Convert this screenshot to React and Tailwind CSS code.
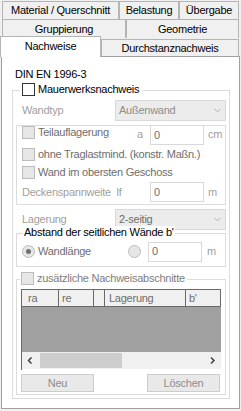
import React from "react";

function Tab({ className, children }) {
  return (
    <div className={`flex items-center justify-center border-l border-r border-t border-[#b4b4b4] bg-[#f0f0f0] ${className}`}>
      {children}
    </div>
  );
}

function Box({ enabled }) {
  return enabled ? (
    <span className="block h-[13px] w-[13px] shrink-0 border border-[#333333] bg-white" />
  ) : (
    <span className="block h-[13px] w-[13px] shrink-0 border border-[#bcbcbc] bg-[#e6e6e6]" />
  );
}

function Radio({ checked }) {
  return (
    <span className="flex h-[13px] w-[13px] shrink-0 items-center justify-center rounded-full border border-[#bcbcbc] bg-[#e6e6e6]">
      {checked && <span className="block h-[5px] w-[5px] rounded-full bg-[#707070]" />}
    </span>
  );
}

function Chevron() {
  return (
    <svg width="7" height="5" viewBox="0 0 7 5" className="shrink-0">
      <path d="M0.5 0.8 L3.5 3.8 L6.5 0.8" fill="none" stroke="#b0b0b0" strokeWidth="1" />
    </svg>
  );
}

function Select({ value, color }) {
  return (
    <div className={`flex h-[21px] w-[111px] items-center justify-between border border-[#d9d9d9] bg-[#ececec] pl-[3px] pr-[4px] ${color}`}>
      <span>{value}</span>
      <Chevron />
    </div>
  );
}

function Field({ className = "" }) {
  return (
    <div className={`flex h-[20px] w-[54px] shrink-0 items-center border border-[#d9d9d9] bg-white pl-[3px] text-[#6d6d6d] ${className}`}>
      0
    </div>
  );
}

function Check({ label, color = "text-[#6d6d6d]" }) {
  return (
    <div className="flex h-[13px] items-center">
      <Box />
      <span className={`ml-[3px] whitespace-nowrap ${color}`}>{label}</span>
    </div>
  );
}

export default function App() {
  return (
    <div className="h-[411px] w-[241px] overflow-hidden bg-[#f0f0f0] font-['Liberation_Sans',Arial,sans-serif] text-[11px] leading-[13px] tracking-[-0.25px] text-black">
      {/* tab rows */}
      <div className="flex pl-[2px] pt-[1px]">
        <Tab className="h-[18px] w-[117px]">Material / Querschnitt</Tab>
        <Tab className="h-[18px] w-[60px]">Belastung</Tab>
        <Tab className="h-[18px] w-[60px]">Übergabe</Tab>
      </div>
      <div className="flex pl-[2px]">
        <Tab className="h-[19px] w-[124px]">Gruppierung</Tab>
        <Tab className="h-[19px] w-[113px]">Geometrie</Tab>
      </div>
      <div className="flex h-[18px] items-end">
        <div className="relative z-10 -mb-px flex h-[21px] w-[101px] items-center justify-center border-l border-r border-t border-[#b4b4b4] bg-white pb-[2px]">
          Nachweise
        </div>
        <Tab className="h-[17px] w-[138px]">Durchstanznachweis</Tab>
      </div>

      {/* tab page */}
      <div className="ml-[1px] h-[353px] w-[239px] border border-[#a0a0a0] bg-white">
        <div className="ml-[13px] mt-[10px] h-[14px] leading-[14px]">DIN EN 1996-3</div>

        <div className="relative ml-[10px] mt-[9px] h-[309px] w-[218px] border border-[#dcdcdc]">
          <div className="absolute left-[7px] top-[-8px] flex items-center bg-white px-[2px]">
            <Box enabled />
            <span className="ml-[3px] mr-[2px]">Mauerwerksnachweis</span>
          </div>

          <div className="mt-[9px] flex h-[21px] items-center">
            <span className="w-[102px] pl-[9px] text-[#a0a0a0]">Wandtyp</span>
            <Select value="Außenwand" color="text-[#8d8d8d]" />
          </div>

          <div className="ml-[3px] mt-[4px] h-[80px] w-[210px] border border-[#dcdcdc]">
            <div className="-mt-px flex h-[20px] items-start">
              <div className="ml-[5px] mt-[1px] w-[115px]">
                <Check label="Teilauflagerung" />
              </div>
              <span className="mt-[3px] w-[13px] text-[#a0a0a0]">a</span>
              <Field />
              <span className="ml-[4px] mt-[3px] text-[#a0a0a0]">cm</span>
            </div>
            <div className="ml-[5px] mt-[3px]">
              <Check label="ohne Traglastmind. (konstr. Maßn.)" />
            </div>
            <div className="ml-[5px] mt-[5px]">
              <Check label="Wand im obersten Geschoss" />
            </div>
            <div className="mt-[3px] flex h-[20px] items-center">
              <span className="w-[133px] whitespace-pre pl-[5px] text-[#a0a0a0]">Deckenspannweite  lf</span>
              <Field />
              <span className="ml-[4px] text-[#a0a0a0]">m</span>
            </div>
          </div>

          <div className="mt-[4px] flex h-[21px] items-center">
            <span className="w-[102px] pl-[9px] text-[#a0a0a0]">Lagerung</span>
            <Select value="2-seitig" color="text-[#6d6d6d]" />
          </div>

          <div className="relative ml-[3px] mt-[3px] h-[34px] w-[210px] border border-[#dcdcdc]">
            <span className="absolute left-[6px] top-[-8px] whitespace-nowrap bg-white px-[1px]">Abstand der seitlichen Wände b'</span>
            <div className="mt-[8px] flex h-[19px] items-center">
              <div className="ml-[5px] flex w-[106px] items-center">
                <Radio checked />
                <span className="ml-[3px] text-[#6d6d6d]">Wandlänge</span>
              </div>
              <Radio />
              <Field className="ml-[7px] h-[19px]" />
              <span className="ml-[5px] text-[#a0a0a0]">m</span>
            </div>
          </div>

          <div className="relative ml-[3px] mt-[12px] h-[116px] w-[210px] border border-[#dcdcdc]">
            <div className="absolute left-[3px] top-[-8px] flex items-center bg-white pl-[1px] pr-[2px]">
              <Box />
              <span className="ml-[3px] text-[#7d7d7d]">zusätzliche Nachweisabschnitte</span>
            </div>

            <div className="ml-[4px] mt-[9px] h-[81px] w-[200px] border-l border-t border-[#696969]">
              <div className="flex h-[17px] border-b border-[#696969] bg-[#f0f0f0] text-[#6d6d6d]">
                <span className="flex w-[37px] items-center border-r border-[#696969] pl-[6px]">ra</span>
                <span className="flex w-[35px] items-center border-r border-[#696969] pl-[3px]">re</span>
                <span className="w-[11px] border-r border-[#696969]" />
                <span className="flex w-[81px] items-center border-r border-[#696969] pl-[4px]">Lagerung</span>
                <span className="flex w-[35px] items-center border-r border-[#696969] pl-[3px]">b'</span>
              </div>
              <div className="h-[45px] bg-[#a0a0a0]" />
              <div className="flex h-[17px] items-center bg-[#f0f0f0]">
                <svg width="18" height="17" viewBox="0 0 18 17" className="shrink-0">
                  <path d="M9.5 5.5 L6.5 8.5 L9.5 11.5" fill="none" stroke="#404040" strokeWidth="1.5" />
                </svg>
                <div className="h-[15px] w-[82px] bg-[#cdcdcd]" />
                <div className="flex-1" />
                <svg width="18" height="17" viewBox="0 0 18 17" className="shrink-0">
                  <path d="M8 5.5 L11 8.5 L8 11.5" fill="none" stroke="#404040" strokeWidth="1.5" />
                </svg>
              </div>
            </div>

            <div className="ml-[4px] mt-[4px] flex w-[199px] justify-between">
              <div className="flex h-[18px] w-[73px] items-center justify-center border border-[#cccccc] bg-[#e9e9e9] text-[#8d8d8d]">Neu</div>
              <div className="flex h-[18px] w-[73px] items-center justify-center border border-[#cccccc] bg-[#e9e9e9] text-[#8d8d8d]">Löschen</div>
            </div>
          </div>
        </div>
      </div>
    </div>
  );
}
